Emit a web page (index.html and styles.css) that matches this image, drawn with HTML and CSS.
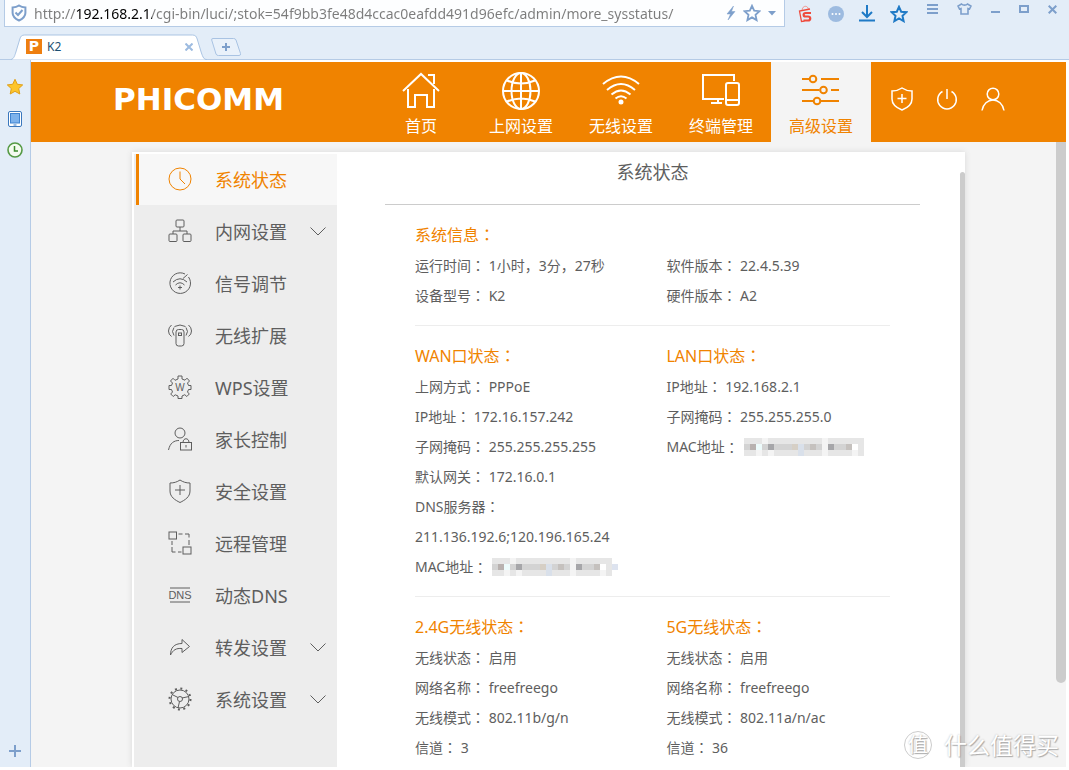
FILE: index.html
```html
<!DOCTYPE html>
<html lang="zh-CN">
<head>
<meta charset="utf-8">
<meta name="viewport" content="width=device-width, initial-scale=1">
<title>K2</title>
<link rel="stylesheet" href="styles.css">
</head>
<body>
<header class="chrome">
  <div class="toolbar">
    <div class="address">
      <svg class="shield" width="16" height="18" viewBox="0 0 16 18" fill="none" stroke="#7d9fcb" stroke-width="2"><path d="M8 1.5C6 3 4 3.4 1.6 3.4V9c0 4 3.200 6 6.400 7.500C11.200 15 14.400 13 14.400 9V3.400C12 3.400 10 3 8 1.500Z"/><path d="M4.500 8.500 7 11l4.500-5"/></svg>
      <input class="url" type="text" aria-label="地址" value="http://192.168.2.1/cgi-bin/luci/;stok=54f9bb3fe48d4ccac0eafdd491d96efc/admin/more_sysstatus/">
      <button class="icon-btn" aria-label="极速"><svg width="10" height="16" viewBox="0 0 10 16"><path d="M7.500 1 1 9h3.500L2 15l7-8.500H5.500Z" fill="#7d9fcb" stroke="#7d9fcb" stroke-width=".5"/></svg></button>
      <button class="icon-btn" aria-label="收藏"><svg width="18" height="18" viewBox="0 0 18 18"><path d="m9 1.800 2.200 4.900 5.200.5-3.900 3.600 1.100 5.300L9 13.400l-4.600 2.700 1.100-5.300L1.600 7.200l5.200-.5Z" fill="none" stroke="#7d9fcb" stroke-width="1.800"/></svg></button>
      <button class="icon-btn" aria-label="历史"><svg width="8" height="5" viewBox="0 0 8 5"><path d="M0 0h8L4 4.500Z" fill="#7d9fcb"/></svg></button>
    </div>
    <div class="tools">
      <button class="icon-btn" aria-label="购物"><svg width="15" height="18" viewBox="0 0 15 18" fill="none" stroke="#ef4a3c"><path d="M4 6c0-6 6-6 6.500-1.500" stroke="#f1958d"/><path d="M12 4 1.500 6l2 10.500 3-.3" stroke-width="1.300"/><path d="M13 8H7.500c-2.500 0-2.500 3.500 0 3.500h2.500c3 0 3 4 0 4H5.500" stroke-width="2.200"/></svg></button>
      <button class="icon-btn" aria-label="更多"><svg width="16" height="16" viewBox="0 0 16 16"><circle cx="8" cy="8" r="8" fill="#9dbbe0"/><circle cx="4.500" cy="8" r="1" fill="#fff"/><circle cx="8" cy="8" r="1" fill="#fff"/><circle cx="11.500" cy="8" r="1" fill="#fff"/></svg></button>
      <button class="icon-btn" aria-label="下载"><svg width="16" height="17" viewBox="0 0 16 17" fill="none" stroke="#1f7ac6" stroke-width="2"><path d="M8 0v11.500M3 7l5 5 5-5M0 15.500h16"/></svg></button>
      <button class="icon-btn" aria-label="收藏夹"><svg width="18" height="18" viewBox="0 0 18 18"><path d="m9 1.800 2.200 4.900 5.200.5-3.900 3.600 1.100 5.300L9 13.400l-4.600 2.700 1.100-5.300L1.600 7.200l5.200-.5Z" fill="none" stroke="#1f7ac6" stroke-width="2"/></svg></button>
    </div>
    <div class="window-tools">
      <button class="icon-btn" aria-label="菜单"><svg width="11" height="10" viewBox="0 0 11 10" fill="none" stroke="#7d9fcb" stroke-width="2"><path d="M0 1h11M0 5h11M0 9h11"/></svg></button>
      <button class="icon-btn" aria-label="皮肤"><svg width="15" height="12" viewBox="0 0 15 12"><path d="M4.500 1c1.500 1.500 4.500 1.500 6 0L14 3l-1.500 3-1.500-.5V11H4V5.500L2.500 6 1 3Z" fill="none" stroke="#7d9fcb" stroke-width="1.600"/></svg></button>
      <button class="icon-btn" aria-label="最小化"><svg width="9" height="10" viewBox="0 0 9 10"><path d="M0 8h9" stroke="#7d9fcb" stroke-width="2"/></svg></button>
      <button class="icon-btn" aria-label="最大化"><svg width="10" height="8" viewBox="0 0 10 8"><path d="M1 1h8v6H1Z" fill="none" stroke="#7d9fcb" stroke-width="2"/></svg></button>
      <button class="icon-btn" aria-label="关闭"><svg width="9" height="9" viewBox="0 0 9 9"><path d="m.7.700 7.600 7.600M8.300.700.700 8.300" stroke="#7d9fcb" stroke-width="2"/></svg></button>
    </div>
  </div>
  <div class="tabs">
    <div class="tab">
      <svg class="tab-shape" viewBox="0 0 200 26" preserveAspectRatio="none"><path d="M0 25.500C3 25 4 21 5 18L9 5c1-3 2-4 5-4h171c3 0 4 1 5 4l4 13c2 6 3 7.500 6 7.500" fill="#fff" stroke="#a9c3e3"/></svg>
      <span class="favicon">P</span>
      <span class="tab-title">K2</span>
      <button class="icon-btn" aria-label="关闭标签"><svg width="8" height="8" viewBox="0 0 8 8"><path d="m.5.500 7 7M7.500.500l-7 7" stroke="#9dbbe0" stroke-width="2"/></svg></button>
    </div>
    <button class="icon-btn" aria-label="新标签"><svg width="30" height="18" viewBox="0 0 30 18"><path d="M2 .5h20.500q2 0 2.500 1.500l4.500 13.500q.5 2-1.500 2H7.500q-2 0-2.500-1.500L.7 2Q.300.500 2 .500Z" fill="#e9f1fa" stroke="#a9c3e3"/><path d="M15 5v8M11 9h8" stroke="#7d9fcb" stroke-width="2"/></svg></button>
  </div>
</header>

<div class="window">
  <aside class="dock">
    <button class="icon-btn" aria-label="收藏"><svg width="18" height="18" viewBox="0 0 18 18"><path d="m9 1.300 2.300 5 5.400.6-4 3.700 1.100 5.400L9 13.300 4.200 16l1.100-5.400-4-3.700 5.400-.6Z" fill="#fdc52c" stroke="#e0a01a"/></svg></button>
    <button class="icon-btn" aria-label="手机"><svg width="14" height="16" viewBox="0 0 14 16"><rect x=".5" y=".5" width="13" height="15" rx="1.500" fill="#fff" stroke="#3a77bd"/><rect x="2.500" y="2.500" width="9" height="9.500" fill="#7db2ec" stroke="#3f83d0"/><path d="M5.500 14h3" stroke="#3a77bd"/></svg></button>
    <button class="icon-btn" aria-label="历史"><svg width="16" height="16" viewBox="0 0 16 16"><circle cx="8" cy="8" r="7" fill="#f4fbf0" stroke="#559a45" stroke-width="1.600"/><path d="M7.500 4v5H11" fill="none" stroke="#3b8a2b" stroke-width="1.500"/></svg></button>
    <button class="icon-btn dock-add" aria-label="添加"><svg width="12" height="12" viewBox="0 0 12 12"><path d="M6 0v12M0 6h12" stroke="#7d9fcb" stroke-width="2"/></svg></button>
  </aside>

  <div class="page">
    <div class="banner">
      <div class="brand">PHICOMM</div>
      <nav class="menu">
        <a href="#"><svg width="38" height="36" viewBox="0 0 38 36"><path d="M1 19 19 2l18 17M26 3h6v9M6 17v18h7V23h12v12h7V17"/></svg>首页</a>
        <a href="#"><svg width="38" height="38" viewBox="0 0 38 38"><circle cx="19" cy="19" r="18"/><ellipse cx="19" cy="19" rx="9.500" ry="18"/><path d="M19 1v36M1 19h36M5 8.500q14 6 28 0M5 29.500q14-6 28 0"/></svg>上网设置</a>
        <a href="#"><svg width="38" height="36" viewBox="0 0 38 36"><path d="M1 12q18-15 36 0M5 18q14-12 28 0M9.500 22.500q9.500-8 19 0M13.500 26.500q5.500-4.500 11 0"/><circle cx="19" cy="30" r="1.500" fill="currentColor"/></svg>无线设置</a>
        <a href="#"><svg width="38" height="36" viewBox="0 0 38 36"><path d="M22 27H1V3h31v6M16 27v4M9 31h11"/><rect x="24" y="11" width="13" height="22" rx="2"/><path d="M24 28h13"/></svg>终端管理</a>
        <a href="#" class="active"><svg width="38" height="36" viewBox="0 0 38 36"><path d="M0 7h7.500M15 7m4 0h18M0 18h17.500M29 18h8M0 29h11.500M19 29h18"/><circle cx="11" cy="7" r="3.300"/><circle cx="21.500" cy="18" r="3.300"/><circle cx="15" cy="29" r="3.300"/></svg>高级设置</a>
      </nav>
      <div class="account">
        <button class="icon-btn" aria-label="安全"><svg width="22" height="24" viewBox="0 0 22 24"><path d="M11 1C8 3 5 4 1 4v8c0 6 5 9 10 11 5-2 10-5 10-11V4c-4 0-7-1-10-3ZM11 7v9M6.500 11.500h9"/></svg></button>
        <button class="icon-btn" aria-label="退出"><svg width="22" height="24" viewBox="0 0 22 24"><path d="M6.500 4.500a9.300 9.300 0 1 0 9 0M11 2v10"/></svg></button>
        <button class="icon-btn" aria-label="用户"><svg width="24" height="24" viewBox="0 0 24 24"><circle cx="12" cy="7" r="5.800"/><path d="M1 23.500C2 17 7 13 12 13s10 4 11 10.500"/></svg></button>
      </div>
    </div>

    <div class="stage">
      <div class="panel">
        <nav class="side">
          <a href="#" class="active"><svg viewBox="0 0 24 24"><circle cx="12" cy="12" r="11"/><path d="M12 4.500V12l5 5"/></svg>系统状态</a>
          <a href="#"><svg viewBox="0 0 24 24"><rect x="8" y="1" width="8" height="7" rx="1"/><path d="M12 8v4M5 15v-3h14v3"/><rect x="1" y="15" width="8" height="7.500" rx="1"/><rect x="15" y="15" width="8" height="7.500" rx="1"/></svg>内网设置<svg class="chevron" viewBox="0 0 16 9"><path d="m.5.500 7.500 7.500L15.500.500"/></svg></a>
          <a href="#"><svg viewBox="0 0 24 24"><path d="M17 3A10.300 10.300 0 1 0 20.500 6M19.500 3.500 15 7.500M5 11q7-6.500 14 0M7.500 14q4.500-4.500 9 0"/><path d="M12 14.500v4M10 16.500h4"/></svg>信号调节</a>
          <a href="#"><svg viewBox="0 0 24 24"><rect x="8" y="6.500" width="8" height="16.500" rx="2.500"/><rect x="10.500" y="10" width="3" height="2.500"/><path d="M6 4.500q-3 4 0 8M3.500 2Q.500 4.500.5 8t3 5.500M18 4.500q3 4 0 8M20.500 2q3 2.500 3 6t-3 5.500M6.500 3.500Q12 .5 17.500 3.500"/></svg>无线扩展</a>
          <a href="#"><svg viewBox="0 0 24 24"><path d="M10 1h4v3l3 1.200 2-2L21.500 6l-2 2 1 2.500H23v4h-2.500l-1 2.500 1.800 2-2.500 2.500-2-1.800L14 21v2.500h-4V21l-2.800-1.200-2 1.700-2.500-2.500 1.800-2-1-2.500H1v-4h2.500l1-2.500-2-2L5 3.300l2 2L10 4Z"/><text class="wps" x="12" y="15.500">W</text></svg>WPS设置</a>
          <a href="#"><svg viewBox="0 0 24 24"><circle cx="12" cy="6" r="5"/><path d="M.5 23C2 16 6 13.500 11 13.500"/><rect x="12.500" y="15.500" width="11" height="7.500"/><path d="M15 15.500c0-5 6-5 6 0M18 18v2.500"/></svg>家长控制</a>
          <a href="#"><svg viewBox="0 0 24 24"><path d="M12 1C9 3 6 4 2 4v8c0 6 5 9 10 11.500C17 21 22 18 22 12V4c-4 0-7-1-10-3ZM12 6v10M7 11h10"/></svg>安全设置</a>
          <a href="#"><svg viewBox="0 0 24 24"><rect x="1" y="1" width="7.500" height="7"/><rect x="15" y="16" width="8" height="7"/><path d="M10.500 3h4M17 3h4v3.500M21 9v5M4 10v4M4 16v5h3.500M10 21h3.500"/></svg>远程管理</a>
          <a href="#"><svg viewBox="0 0 24 24"><path d="M2 5h20M2 19h20"/><text class="dns" x="12" y="16">DNS</text></svg>动态DNS</a>
          <a href="#"><svg viewBox="0 0 24 24"><path d="M2.500 20C2.500 13 6 8.500 14 8.500V4.500l7.500 7-7.500 6v-4C8 13 5 15 2.500 20Z"/></svg>转发设置<svg class="chevron" viewBox="0 0 16 9"><path d="m.5.500 7.500 7.500L15.500.500"/></svg></a>
          <a href="#"><svg viewBox="0 0 24 24"><circle cx="12" cy="12" r="9"/><circle cx="12" cy="12" r="10.500" stroke-width="2" stroke-dasharray="2 3.500"/><circle cx="12" cy="12" r="2.500"/><path d="m10 10.500-6-3M14 11l7-1.500M11.500 14.500 10 21"/></svg>系统设置<svg class="chevron" viewBox="0 0 16 9"><path d="m.5.500 7.500 7.500L15.500.500"/></svg></a>
        </nav>

        <main class="content">
          <h1>系统状态</h1>
          <section class="group">
            <div>
              <h2>系统信息<i>：</i></h2>
              <p>运行时间<i>：</i> 1小时，3分，27秒</p>
              <p>设备型号<i>：</i> K2</p>
            </div>
            <div>
              <h2>&nbsp;</h2>
              <p>软件版本<i>：</i> 22.4.5.39</p>
              <p>硬件版本<i>：</i> A2</p>
            </div>
          </section>
          <section class="group">
            <div>
              <h2>WAN口状态<i>：</i></h2>
              <p>上网方式<i>：</i> PPPoE</p>
              <p>IP地址<i>：</i> 172.16.157.242</p>
              <p>子网掩码<i>：</i> 255.255.255.255</p>
              <p>默认网关<i>：</i> 172.16.0.1</p>
              <p>DNS服务器<i>：</i></p>
              <p>211.136.192.6;120.196.165.24</p>
              <p class="mac">MAC地址<i>：</i> <svg width="126" height="18" viewBox="0 0 126 18"><use href="#mosaic"/><path d="M120 6h6v6h-6z" fill="#dde3ef"/></svg></p>
            </div>
            <div>
              <h2>LAN口状态<i>：</i></h2>
              <p>IP地址<i>：</i> 192.168.2.1</p>
              <p>子网掩码<i>：</i> 255.255.255.0</p>
              <p class="mac">MAC地址<i>：</i> <svg width="120" height="18" viewBox="0 0 120 18"><g id="mosaic"><path d="M0 0h120v18H0z" fill="#e6e6e6"/><path d="M18 0h6v6h-6zM12 12h6v6h-6zM24 12h6v6h-6zM108 12h6v6h-6zM78 0h6v18h-6z" fill="#f4f4f4"/><path d="M0 6h6v6H0zM18 6h6v6h-6zM30 6h18v6H30zM60 6h6v6h-6zM90 6h12v6H90zM72 6h6v6h-6z" fill="#d3d3d3"/><path d="M6 6h6v6H6z" fill="#b8b1af"/><path d="M12 6h6v6h-6z" fill="#edfbfb"/><path d="M24 6h6v6h-6zM84 6h6v6h-6z" fill="#a6a6a9"/><path d="M48 6h6v6h-6z" fill="#d6cfc5"/><path d="M54 6h6v12h-6z" fill="#d9e0ea"/><path d="M66 6h6v6h-6zM102 6h6v6h-6z" fill="#c5c1be"/><path d="M108 6h6v6h-6z" fill="#fff"/></g></svg></p>
            </div>
          </section>
          <section class="group">
            <div>
              <h2>2.4G无线状态<i>：</i></h2>
              <p>无线状态<i>：</i> 启用</p>
              <p>网络名称<i>：</i> freefreego</p>
              <p>无线模式<i>：</i> 802.11b/g/n</p>
              <p>信道<i>：</i> 3</p>
            </div>
            <div>
              <h2>5G无线状态<i>：</i></h2>
              <p>无线状态<i>：</i> 启用</p>
              <p>网络名称<i>：</i> freefreego</p>
              <p>无线模式<i>：</i> 802.11a/n/ac</p>
              <p>信道<i>：</i> 36</p>
            </div>
          </section>
        </main>
        <div class="panel-scroll"></div>
      </div>
      <div class="page-scroll"></div>
    </div>
  </div>
</div>
<div class="watermark"><span class="seal">值</span>什么值得买</div>
</body>
</html>
```

FILE: styles.css
```css
* { box-sizing: border-box; }

body {
  margin: 0;
  min-height: 100vh;
  display: flex;
  flex-direction: column;
  padding: 0 3px 3px 0;
  background: #fff;
  color: #5e5e5e;
  font-family: "Noto Sans", "Noto Sans CJK SC", sans-serif;
  font-size: 14px;
}

a { color: inherit; text-decoration: none; }
svg { display: block; flex: none; }

.icon-btn {
  display: block;
  padding: 0;
  border: 0;
  background: none;
}

/* browser frame */
.chrome {
  margin-right: -3px;
  background: #e3edf8;
  border-bottom: 1px solid #b5cbe6;
}
.toolbar { display: flex; height: 34px; padding-left: 4px; }
.address {
  flex: 1;
  display: flex;
  align-items: center;
  gap: 7px;
  height: 27px;
  padding: 0 8px 0 6px;
  background: #fdfeff;
  border: 1px solid #b5cbe6;
  border-top: 0;
}
.url {
  flex: 1;
  min-width: 0;
  height: 26px;
  padding: 0;
  border: 0;
  outline: 0;
  color: #7c7c7c;
  font: 14px "Noto Sans", sans-serif;
  background: linear-gradient(90deg, #7c7c7c 42px, #000 42px, #000 118px, #7c7c7c 118px);
  -webkit-background-clip: text;
  background-clip: text;
  -webkit-text-fill-color: transparent;
}
.tools {
  display: flex;
  align-items: center;
  gap: 15px;
  height: 27px;
  padding: 0 19px 0 13px;
}
.window-tools { display: flex; align-items: center; gap: 19px; height: 18px; padding-right: 12px; }
.tabs { display: flex; align-items: center; gap: 4px; height: 25px; padding-left: 11px; }
.tab {
  position: relative;
  display: flex;
  align-items: center;
  gap: 5px;
  width: 196px;
  height: 25px;
  padding: 0 14px 0 15px;
}
.tab > * { position: relative; }
.tab .tab-shape { position: absolute; left: 0; top: 0; width: 100%; height: 26px; }
.favicon {
  width: 16px;
  height: 15px;
  background: #ee7f10;
  color: #fff;
  font: bold 14px/15px "DejaVu Sans", sans-serif;
  text-align: center;
}
.tab-title { flex: 1; color: #1b4f72; font-size: 12px; }

.window { flex: 1; display: flex; }
.dock {
  display: flex;
  flex-direction: column;
  align-items: center;
  gap: 15px;
  width: 31px;
  padding: 18px 0 10px;
  background: #e3edf8;
  border-right: 1px solid #b5cbe6;
}
.dock-add { margin-top: auto; }

/* router page */
.page {
  flex: 1;
  min-width: 0;
  display: flex;
  flex-direction: column;
  margin-top: 2px;
  background: #f4f4f4;
}
.banner {
  display: flex;
  height: 80px;
  padding-left: 82px;
  background: #f08300;
  color: #fff;
}
.brand {
  flex: 1;
  font: bold 31px/74px "DejaVu Sans", sans-serif;
}
.menu { display: flex; }
.menu a {
  display: flex;
  flex-direction: column;
  align-items: center;
  justify-content: space-between;
  width: 100px;
  padding: 10px 0 4px;
  font-size: 16px;
  line-height: 24px;
}
.menu .active { background: #f4f4f4; color: #f08300; }
.menu svg, .account svg { fill: none; stroke: currentColor; stroke-width: 2; }
.account {
  display: flex;
  align-items: center;
  gap: 23px;
  width: 195px;
  padding: 0 0 6px 20px;
}
.account .icon-btn { color: inherit; }
.account svg { stroke-width: 1.5; }

.stage { flex: 1; display: flex; padding-left: 101px; }
.panel {
  flex: 1;
  display: flex;
  margin: 10px 91px 0 0;
  background: #fff;
  box-shadow: 0 0 6px #d8d8d8;
  clip-path: inset(-6px -6px 0);
}
.page-scroll {
  width: 10px;
  height: 541px;
  background: #ccc;
  border-radius: 0 0 5px 5px;
}
.panel-scroll { width: 5px; margin-top: 20px; background: #ccc; border-radius: 3px 3px 0 0; }

.side { width: 203px; margin: 2px 0 0 2px; background: #ededed; }
.side a {
  display: flex;
  align-items: center;
  height: 52px;
  padding: 0 11px 0 34px;
  gap: 23px;
  font-size: 18px;
}
.side a.active {
  height: 51px;
  border-left: 3px solid #f08300;
  margin-left: 2px;
  padding: 0 11px 2px 29px;
  background: #f7f7f7;
  color: #f08300;
}
.side svg { width: 24px; height: 24px; fill: none; stroke: currentColor; stroke-width: 1; }
.side .chevron { width: 16px; height: 9px; margin-left: auto; }
.side text { font: 11px "Liberation Sans", sans-serif; fill: currentColor; stroke: none; text-anchor: middle; }
.side .wps { font-size: 10px; }

.content { flex: 1; padding: 0 40px 0 48px; }
h1 {
  margin: 0;
  padding-bottom: 12px;
  border-bottom: 1px solid #ccc;
  font-size: 18px;
  font-weight: 400;
  line-height: 40px;
  text-align: center;
}
.group {
  display: grid;
  grid-template-columns: 9fr 8fr;
  margin: 0 30px;
  padding: 14px 0;
}
.group + .group { border-top: 1px solid #ededed; }
.group:last-child { padding-bottom: 0; }
h2 {
  margin: 0;
  color: #f08300;
  font-size: 16px;
  font-weight: 400;
  line-height: 32px;
}
p { margin: 0; line-height: 30px; white-space: nowrap; }
/* full-width colon, centred in its cell */
i {
  display: inline-block;
  width: 1em;
  font-family: "Noto Sans CJK TC", sans-serif;
  font-style: normal;
  line-height: 1;
  text-align: center;
  -webkit-locale: "zh-TW";
}
.mac { display: flex; align-items: center; }
.mac svg { margin-left: 5px; }

.watermark {
  position: absolute;
  right: 10px;
  bottom: 8px;
  display: flex;
  align-items: center;
  gap: 12px;
  color: #fff;
  font-size: 23px;
  line-height: 34px;
  text-shadow: 1px 1px 1px #aaa, 0 0 2px #bbb;
}
.seal {
  width: 28px;
  height: 28px;
  border: 1px solid #ccc;
  border-radius: 50%;
  font-size: 20px;
  line-height: 25px;
  text-align: center;
}
```
